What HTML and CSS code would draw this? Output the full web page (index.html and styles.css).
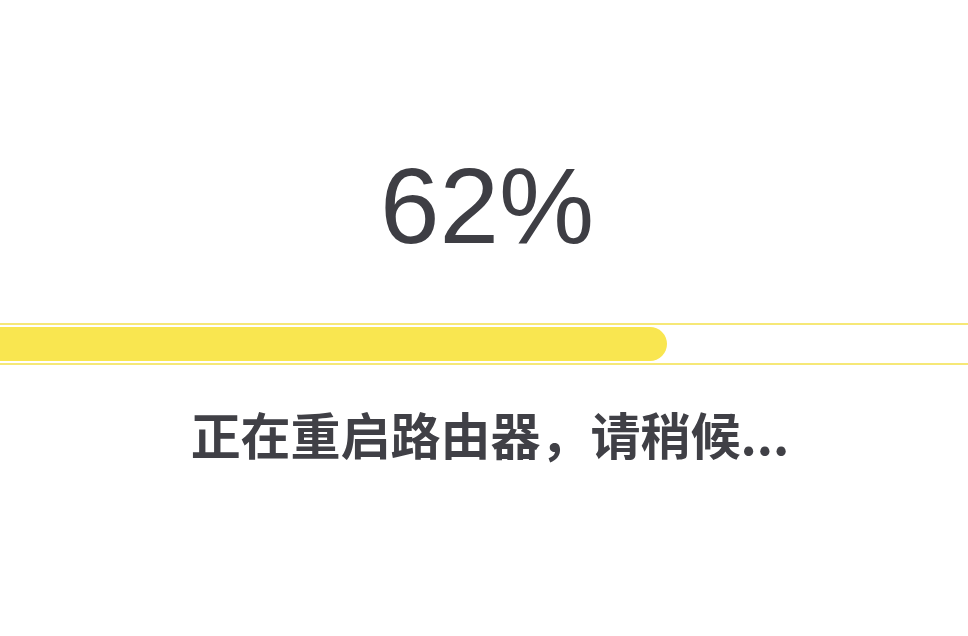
FILE: index.html
```html
<!DOCTYPE html>
<html lang="zh-CN">
<head>
<meta charset="utf-8">
<link rel="stylesheet" href="styles.css">
</head>
<body>
<main class="screen">
  <div class="percent">62%</div>
  <div class="bar">
    <div class="fill" style="width: 667px"></div>
  </div>
  <p class="message">正在重启路由器，请稍候...</p>
</main>
</body>
</html>
```

FILE: styles.css
```css
html, body {
  margin: 0;
  padding: 0;
  background: #ffffff;
}
.screen {
  width: 968px;
  height: 636px;
  display: flex;
  flex-direction: column;
  align-items: center;
  padding-top: 153px;
  box-sizing: border-box;
}
.percent {
  font-family: "Liberation Sans", Arial, sans-serif;
  font-size: 107px;
  line-height: 107px;
  height: 107px;
  padding-left: 6px;
  color: #3e3e44;
}
.bar {
  margin-top: 63px;
  width: 100%;
  box-sizing: border-box;
  border-top: 2px solid #f6e877;
  border-bottom: 2px solid #f6e877;
  padding: 2px 0;
}
.fill {
  height: 34px;
  background: #f9e650;
  border-radius: 0 17px 17px 0;
}
.message {
  margin: 43px 0 0;
  padding-left: 12px;
  font-family: "Noto Sans CJK SC", "Noto Sans", sans-serif;
  font-weight: 700;
  font-size: 50px;
  line-height: 50px;
  color: #404046;
}
```
